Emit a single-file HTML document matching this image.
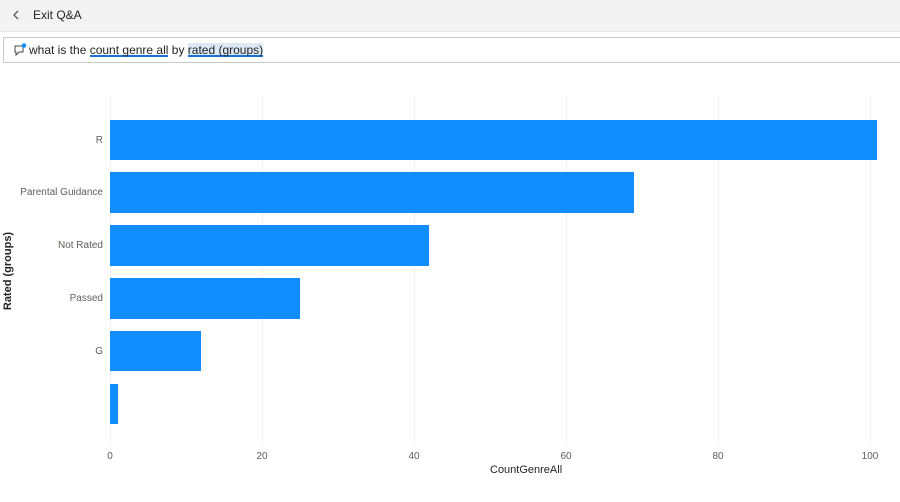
<!DOCTYPE html>
<html><head><style>
body{margin:0;width:900px;height:502px;background:#fff;font-family:"Liberation Sans",sans-serif;position:relative;overflow:hidden}
.hdr{position:absolute;left:0;top:0;width:900px;height:31px;background:#f3f3f3;border-bottom:1px solid #e6e6e6}
.hdr span{position:absolute;left:33px;top:8px;font-size:12px;color:#252423}
.q{position:absolute;left:3px;top:37px;width:900px;height:24px;border:1px solid #c8c8c8;border-radius:2px;background:#fff}
.q .t{position:absolute;left:25px;top:5px;font-size:12px;color:#252423}
.u{display:inline-block;line-height:14px;box-shadow:inset 0 -2px 0 #1a73d9}
.h{display:inline-block;line-height:14px;background:#dbe9f6;box-shadow:inset 0 -2px 0 #1a73d9}
.grid{position:absolute;top:98px;height:346px;border-left:1px dotted #e3e3e3}
.bar{position:absolute;left:110px;background:#118dff}
.yl{position:absolute;right:797px;font-size:10px;color:#605e5c;text-align:right;white-space:nowrap}
.xl{position:absolute;top:451px;font-size:10px;color:#605e5c;width:30px;margin-left:-15px;text-align:center}
</style></head><body>
<div class="hdr"><svg style="position:absolute;left:12px;top:10px" width="8" height="10"><path d="M6 1L2 5L6 9" stroke="#444" fill="none" stroke-width="1.2"/></svg><span>Exit Q&amp;A</span></div>
<div class="q"><svg style="position:absolute;left:9px;top:5px" width="14" height="14"><path d="M2 3h8v6H6l-3 3V9H2z" stroke="#444" fill="none" stroke-width="1"/><circle cx="11" cy="2.5" r="2.3" fill="#118dff"/></svg><div class="t">what is the <span class="u">count genre all</span> by <span class="h">rated (groups)</span></div></div>
<div class="grid" style="left:110px"></div><div class="grid" style="left:262px"></div><div class="grid" style="left:414px"></div><div class="grid" style="left:566px"></div><div class="grid" style="left:718px"></div><div class="grid" style="left:870px"></div>
<div class="bar" style="top:120px;height:40px;width:767px"></div>
<div class="bar" style="top:172px;height:41px;width:524px"></div>
<div class="bar" style="top:225px;height:41px;width:319px"></div>
<div class="bar" style="top:278px;height:41px;width:190px"></div>
<div class="bar" style="top:331px;height:40px;width:91px"></div>
<div class="bar" style="top:384px;height:40px;width:8px"></div>
<div class="yl" style="top:135px">R</div>
<div class="yl" style="top:187px">Parental Guidance</div>
<div class="yl" style="top:240px">Not Rated</div>
<div class="yl" style="top:293px">Passed</div>
<div class="yl" style="top:346px">G</div>
<div class="xl" style="left:110px">0</div><div class="xl" style="left:262px">20</div><div class="xl" style="left:414px">40</div><div class="xl" style="left:566px">60</div><div class="xl" style="left:718px">80</div><div class="xl" style="left:870px">100</div>
<div style="position:absolute;left:490px;top:464px;font-size:11px;color:#252423">CountGenreAll</div>
<div style="position:absolute;left:-32px;top:265px;width:80px;text-align:center;transform:rotate(-90deg);font-size:11px;font-weight:bold;color:#252423;white-space:nowrap">Rated (groups)</div>
</body></html>
